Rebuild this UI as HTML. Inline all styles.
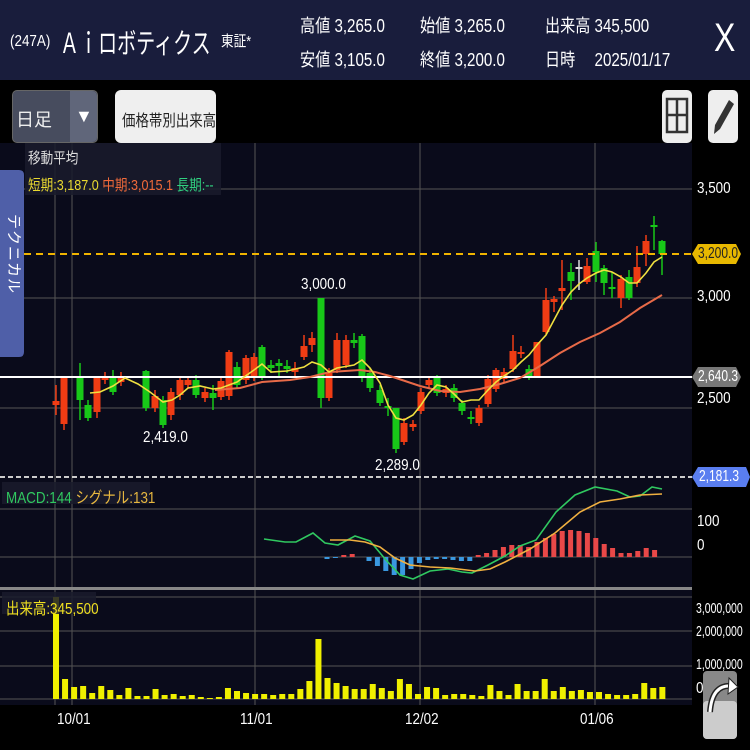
<!DOCTYPE html>
<html><head><meta charset="utf-8">
<style>
*{margin:0;padding:0;box-sizing:border-box}
body{width:750px;height:750px;background:#000;overflow:hidden;position:relative;font-family:"Liberation Sans","Noto Sans CJK JP",sans-serif;color:#fff}
.hdr{position:absolute;left:0;top:0;width:750px;height:80px;background:#191d3c}
.a{position:absolute;white-space:nowrap}
.n{transform:scaleX(.84);transform-origin:0 0}
</style></head><body>
<div class="hdr">
<div class="a n" style="left:10px;top:33px;font-size:16px">(247A)</div>
<div class="a n" style="left:60px;top:22px;font-size:28px;transform:scaleX(.68)">Ａｉロボティクス</div>
<div class="a n" style="left:221px;top:30px;font-size:15px">東証*</div>
<div class="a n" style="left:300px;top:12px;font-size:18px">高値 3,265.0</div>
<div class="a n" style="left:300px;top:46px;font-size:18px">安値 3,105.0</div>
<div class="a n" style="left:420px;top:12px;font-size:18px">始値 3,265.0</div>
<div class="a n" style="left:420px;top:46px;font-size:18px">終値 3,200.0</div>
<div class="a n" style="left:545px;top:12px;font-size:18px">出来高 345,500</div>
<div class="a n" style="left:545px;top:46px;font-size:18px">日時　 2025/01/17</div>
<div class="a" style="left:714px;top:16px;font-size:40px;font-weight:200;transform:scaleX(.8);transform-origin:0 0">X</div>
</div>
<div class="a" style="left:12px;top:90px;width:86px;height:53px;background:#474c5e;border-radius:5px;border:1px solid #666"></div>
<div class="a" style="left:70px;top:91px;width:27px;height:51px;background:#60667a;border-radius:0 5px 5px 0"></div>
<div class="a" style="left:16px;top:106px;font-size:18px;color:#eee">日足</div>
<div class="a" style="left:75px;top:106px;font-size:18px;color:#fff">▼</div>
<div class="a" style="left:115px;top:90px;width:101px;height:53px;background:#efefef;border-radius:6px"></div>
<div class="a n" style="left:122px;top:107px;font-size:16px;color:#222">価格帯別出来高</div>
<div class="a" style="left:662px;top:90px;width:30px;height:53px;background:#eee;border-radius:5px"></div>
<svg class="a" style="left:662px;top:90px" width="30" height="53"><rect x="5" y="9" width="20" height="33" fill="none" stroke="#333" stroke-width="2.5"/><line x1="15" y1="9" x2="15" y2="42" stroke="#333" stroke-width="2.5"/><line x1="5" y1="25" x2="25" y2="25" stroke="#333" stroke-width="2.5"/></svg>
<div class="a" style="left:708px;top:90px;width:30px;height:53px;background:#eee;border-radius:5px"></div>
<svg class="a" style="left:708px;top:90px" width="30" height="53"><path d="M21 10 L26 14 L12 39 L6 44 L7 35 Z" fill="#333"/></svg>

<svg class="a" style="left:0;top:0" width="750" height="750">
<rect x="0" y="143" width="692" height="562" fill="#0a0b1b"/>
<g stroke="#555" stroke-width="1">
<line x1="55" y1="143" x2="55" y2="705"/><line x1="72" y1="143" x2="72" y2="705"/><line x1="255" y1="143" x2="255" y2="705"/><line x1="420" y1="143" x2="420" y2="705"/><line x1="595" y1="143" x2="595" y2="705"/>
<line x1="0" y1="189" x2="692" y2="189"/><line x1="0" y1="298" x2="692" y2="298"/><line x1="0" y1="408" x2="692" y2="408"/>
<line x1="0" y1="509" x2="692" y2="509"/><line x1="0" y1="557" x2="692" y2="557"/>
<line x1="0" y1="597" x2="692" y2="597"/><line x1="0" y1="631" x2="692" y2="631"/><line x1="0" y1="666" x2="692" y2="666"/><line x1="0" y1="699" x2="692" y2="699"/>
</g>
<g id="cd"></g>
<line x1="0" y1="254" x2="692" y2="254" stroke="#f0b400" stroke-width="2" stroke-dasharray="7,5"/>
<line x1="0" y1="377" x2="692" y2="377" stroke="#fff" stroke-width="2"/>
<line x1="0" y1="477" x2="692" y2="477" stroke="#ccc" stroke-width="2" stroke-dasharray="5,3"/>
<rect x="0" y="587" width="692" height="3" fill="#888"/>
<polyline fill="none" stroke="#e86a48" stroke-width="2" points="215,390 240,388 262,382 290,380 310,377 330,372 360,370 375,372 390,376 405,381 420,386 440,391 460,392 480,389 500,384 520,378 540,366 560,353 580,342 600,333 620,322 640,308 662,295"/>
<polyline fill="none" stroke="#f0e040" stroke-width="1.6" points="90,393 100,392 113,386 125,378 138,384 150,392 163,402 172,400 180,395 188,388 200,386 213,389 221,388 237,382 254,370 262,364 271,372 287,371 304,367 312,362 321,365 329,372 337,368 354,365 362,360 370,368 380,383 388,405 396,418 404,420 413,415 421,405 429,393 437,385 446,387 454,394 462,402 471,400 479,400 488,390 496,382 504,376 513,370 521,362 529,355 537,345 546,335 554,320 562,305 571,292 579,284 587,278 596,273 604,270 612,272 621,277 629,283 637,283 646,273 654,262 662,257"/>
<g id="hist"></g>
<polyline fill="none" stroke="#30c860" stroke-width="1.6" points="264,539 285,542 296,542 313,533 325,543 338,545 355,536 370,541 386,560 400,575 413,579 430,571 448,569 462,572 472,573 488,565 505,556 520,546 536,540 556,512 575,495 595,487 617,491 630,497 640,496 652,487 662,489"/>
<polyline fill="none" stroke="#f0b040" stroke-width="1.6" points="330,540 350,540 365,542 380,547 395,558 410,565 430,567 450,568 475,571 490,569 505,562 530,549 555,533 580,512 600,502 620,499 640,495 662,494"/>
<g id="vol"></g>
<rect x="25" y="143" width="196" height="52" fill="#1a1b2c" opacity="0.85"/>
<rect x="2" y="482" width="148" height="22" fill="#1a1b2c" opacity="0.85"/>
<rect x="2" y="592" width="94" height="22" fill="#1a1b2c" opacity="0.85"/>
<path d="M0 170 H19 Q24 170 24 175 V352 Q24 357 19 357 H0 Z" fill="#4f5fa8"/>
<path d="M692 254 L698 244 H736 L741 254 L736 264 H698 Z" fill="#e8b800"/>
<path d="M692 377 L698 367 H736 L741 377 L736 387 H698 Z" fill="#777"/>
<path d="M692 477 L698 467 H746 L750 477 L746 487 H698 Z" fill="#5a7ef0"/>
<rect x="703" y="671" width="34" height="68" rx="4" fill="#888"/>
<rect x="703" y="701" width="34" height="38" rx="4" fill="#ccc"/>
<path d="M710 712 Q712 684 732 686" fill="none" stroke="#222" stroke-width="6"/>
<path d="M710 712 Q712 684 732 686" fill="none" stroke="#fff" stroke-width="3"/>
<path d="M729 678 L738 687 L728 694 Z" fill="#fff" stroke="#222"/>
</svg>

<div class="a n" style="left:28px;top:147px;font-size:15px;color:#ddd">移動平均</div>
<div class="a n" style="left:28px;top:174px;font-size:15px;color:#e8d830">短期:3,187.0 <span style="color:#f06a3a">中期:3,015.1</span> <span style="color:#30d080">長期:--</span></div>
<div class="a" style="left:4px;top:214px;font-size:15px;color:#fff;writing-mode:vertical-rl;text-orientation:sideways;letter-spacing:1px">テクニカル</div>
<div class="a n" style="left:301px;top:276px;font-size:16px;color:#fff">3,000.0</div>
<div class="a n" style="left:143px;top:429px;font-size:16px;color:#fff">2,419.0</div>
<div class="a n" style="left:375px;top:457px;font-size:16px;color:#fff">2,289.0</div>
<div class="a n" style="left:6px;top:484px;font-size:16px;color:#30c860">MACD:144 <span style="color:#e8b840">シグナル:131</span></div>
<div class="a n" style="left:6px;top:595px;font-size:16px;color:#f0e020">出来高:345,500</div>
<div class="a n" style="left:697px;top:180px;font-size:16px">3,500</div>
<div class="a n" style="left:697px;top:288px;font-size:16px">3,000</div>
<div class="a n" style="left:697px;top:390px;font-size:16px">2,500</div>
<div class="a n" style="left:698px;top:245px;font-size:16px;color:#222;transform:scaleX(.75)">3,200.0</div>
<div class="a n" style="left:698px;top:368px;font-size:16px;color:#fff;transform:scaleX(.75)">2,640.3</div>
<div class="a n" style="left:699px;top:468px;font-size:16px;color:#fff;transform:scaleX(.75)">2,181.3</div>
<div class="a n" style="left:697px;top:513px;font-size:16px">100</div>
<div class="a n" style="left:697px;top:537px;font-size:16px">0</div>
<div class="a n" style="left:696px;top:600px;font-size:15px;transform:scaleX(.7)">3,000,000</div>
<div class="a n" style="left:696px;top:623px;font-size:15px;transform:scaleX(.7)">2,000,000</div>
<div class="a n" style="left:696px;top:656px;font-size:15px;transform:scaleX(.7)">1,000,000</div>
<div class="a n" style="left:696px;top:680px;font-size:16px">0</div>
<div class="a n" style="left:57px;top:711px;font-size:16px">10/01</div>
<div class="a n" style="left:240px;top:711px;font-size:16px">11/01</div>
<div class="a n" style="left:405px;top:711px;font-size:16px">12/02</div>
<div class="a n" style="left:580px;top:711px;font-size:16px">01/06</div>
<script>
var C=[[56,401,405,385,415,'r'],[64,377,424,377,430,'r'],[80,377,400,363,420,'g'],[88,405,418,400,421,'g'],[97,377,412,377,418,'r'],[105,376,380,372,384,'r'],[113,378,392,370,395,'g'],[121,378,382,372,386,'r'],[146,371,408,370,411,'g'],[155,396,408,390,412,'r'],[163,400,425,396,428,'g'],[171,392,415,388,420,'r'],[180,380,395,376,400,'r'],[188,380,385,376,388,'r'],[196,380,395,375,398,'g'],[205,392,398,388,402,'r'],[213,393,398,385,410,'g'],[221,381,397,378,400,'r'],[229,352,396,350,400,'r'],[237,367,385,362,388,'g'],[246,358,380,355,384,'r'],[254,357,378,353,381,'r'],[262,347,378,345,380,'g'],[271,365,368,360,373,'g'],[279,363,366,359,378,'g'],[287,366,369,360,373,'g'],[295,368,372,362,376,'r'],[304,346,357,335,360,'r'],[312,338,345,332,352,'r'],[321,298,398,298,408,'g'],[329,373,398,368,401,'r'],[337,340,370,333,373,'r'],[346,340,365,335,368,'r'],[354,340,343,333,348,'g'],[362,336,378,334,382,'g'],[370,373,388,368,392,'g'],[380,390,403,385,406,'g'],[388,406,408,398,416,'g'],[396,408,449,408,453,'g'],[404,423,442,418,445,'r'],[413,424,427,420,431,'r'],[421,392,411,388,414,'r'],[429,380,385,376,388,'r'],[437,378,393,375,396,'g'],[446,389,393,385,397,'r'],[454,388,398,384,402,'g'],[462,403,411,400,415,'g'],[471,417,419,411,424,'g'],[479,408,423,405,426,'r'],[488,379,404,375,407,'r'],[496,370,389,368,392,'r'],[504,372,379,368,382,'r'],[513,351,369,335,372,'r'],[521,352,354,346,358,'r'],[529,369,376,365,380,'g'],[537,342,376,342,378,'r'],[546,300,332,288,334,'r'],[554,299,302,296,312,'r'],[562,288,291,260,310,'r'],[571,272,281,263,300,'g'],[579,267,268,260,290,'w'],[587,266,282,258,284,'r'],[596,251,272,242,282,'g'],[604,268,283,265,295,'g'],[612,287,289,272,298,'g'],[621,279,298,275,308,'r'],[629,277,298,270,300,'g'],[637,267,283,246,287,'r'],[646,241,254,235,266,'r'],[654,225,227,216,250,'g'],[662,241,254,240,275,'g']];
var col={r:'#f03c14',g:'#18c818',w:'#ddd'},s='';
C.forEach(function(c){var f=col[c[5]];s+='<line x1="'+c[0]+'" y1="'+c[3]+'" x2="'+c[0]+'" y2="'+c[4]+'" stroke="'+f+'" stroke-width="1.5"/><rect x="'+(c[0]-3.5)+'" y="'+c[1]+'" width="7" height="'+Math.max(2,c[2]-c[1])+'" fill="'+f+'"/>';});
document.getElementById('cd').innerHTML=s;
var H=[-2,-1,2,3,0,-4,-9,-14,-18,-18,-12,-6,-3,-2,-2,-3,-4,-4,2,4,7,10,12,12,10,15,19,23,26,27,26,24,19,13,9,4,4,6,9,7];
s='';H.forEach(function(h,i){var x=327+i*8.4;if(h>=0)s+='<rect x="'+(x-2.5)+'" y="'+(557-h)+'" width="5" height="'+h+'" fill="#e84848"/>';else s+='<rect x="'+(x-2.5)+'" y="557" width="5" height="'+(-h)+'" fill="#3a98e0"/>';});
document.getElementById('hist').innerHTML=s;
var V=[102,20,12,13,6,13,9,4,11,3,3,10,4,5,3,4,2,1,2,11,8,6,5,5,4,5,5,10,18,60,21,16,13,10,10,15,11,8,20,15,5,12,11,4,5,5,4,3,14,8,4,15,8,8,20,8,12,8,9,7,7,5,4,4,5,16,11,12];
s='';V.forEach(function(v,i){var x=56+i*9.05;s+='<rect x="'+(x-3)+'" y="'+(699-v)+'" width="6" height="'+v+'" fill="#f0f000"/>';});
document.getElementById('vol').innerHTML=s;
</script>
</body></html>
